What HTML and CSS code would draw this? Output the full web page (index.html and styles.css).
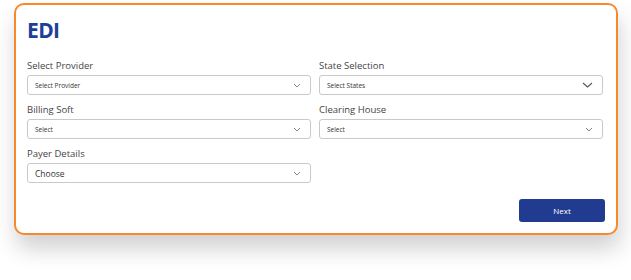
FILE: index.html
```html
<!DOCTYPE html>
<html lang="en">
<head>
  <meta charset="UTF-8">
  <meta name="viewport" content="width=device-width, initial-scale=1.0">
  <title>EDI</title>
  <link rel="stylesheet" href="styles.css">
</head>
<body>

  <div class="card">
    <div class="title">EDI</div>

    <div class="form-grid">
      <div class="field">
        <div class="label">Select Provider</div>
        <div class="dropdown small">
          <span>Select Provider</span>
          <svg class="chevron" width="8" height="5" viewBox="0 0 8 5"><polyline points="1,1 4,4 7,1" /></svg>
        </div>
      </div>
      <div class="field">
        <div class="label">State Selection</div>
        <div class="dropdown small">
          <span>Select States</span>
          <svg class="chevron big" width="11" height="6" viewBox="0 0 11 6"><polyline points="1,1 5.5,5 10,1" /></svg>
        </div>
      </div>

      <div class="field">
        <div class="label">Billing Soft</div>
        <div class="dropdown small">
          <span>Select</span>
          <svg class="chevron" width="8" height="5" viewBox="0 0 8 5"><polyline points="1,1 4,4 7,1" /></svg>
        </div>
      </div>
      <div class="field">
        <div class="label">Clearing House</div>
        <div class="dropdown small">
          <span>Select</span>
          <svg class="chevron" width="8" height="5" viewBox="0 0 8 5"><polyline points="1,1 4,4 7,1" /></svg>
        </div>
      </div>

      <div class="field">
        <div class="label">Payer Details</div>
        <div class="dropdown">
          <span>Choose</span>
          <svg class="chevron" width="8" height="5" viewBox="0 0 8 5"><polyline points="1,1 4,4 7,1" /></svg>
        </div>
      </div>
    </div>

    <div class="actions">
      <button class="next-button">Next</button>
    </div>
  </div>

</body>
</html>
```

FILE: styles.css
```css
body {
  margin: 0;
  min-height: 280px;
  background: #ffffff;
  font-family: 'Open Sans', 'Noto Sans', sans-serif;
}

.card {
  box-sizing: border-box;
  width: 604px;
  height: 232px;
  margin: 3px 0 0 14px;
  padding: 12px 11px 10px 11px;
  background: #ffffff;
  border: 2px solid #f7892b;
  border-radius: 10px;
  box-shadow: 2px 14px 22px rgba(0, 0, 0, 0.18);
}

.title {
  font-size: 21px;
  line-height: 26px;
  font-weight: 700;
  color: #1c3f98;
  margin-bottom: 16px;
  letter-spacing: -0.6px;
}

.form-grid {
  display: grid;
  grid-template-columns: 284px 284px;
  column-gap: 8px;
  row-gap: 8px;
}

.label {
  font-size: 9.5px;
  line-height: 14px;
  color: #444444;
  margin-bottom: 2px;
}

.dropdown {
  box-sizing: border-box;
  height: 20px;
  display: flex;
  align-items: center;
  justify-content: space-between;
  padding: 0 9px 0 7px;
  border: 1px solid #c9c9c9;
  border-radius: 3px;
  font-size: 8.5px;
  color: #333333;
}

.dropdown.small {
  font-size: 6.5px;
}

.chevron polyline {
  fill: none;
  stroke: #777777;
  stroke-width: 0.9;
}

.chevron.big polyline {
  stroke: #555555;
  stroke-width: 1.1;
}

.actions {
  display: flex;
  justify-content: flex-end;
  margin-top: 16px;
}

.next-button {
  width: 86px;
  height: 23px;
  border: none;
  border-radius: 3px;
  background-color: #213b91;
  color: #ffffff;
  font-family: 'Open Sans', 'Noto Sans', sans-serif;
  font-size: 8px;
  cursor: pointer;
}
```
